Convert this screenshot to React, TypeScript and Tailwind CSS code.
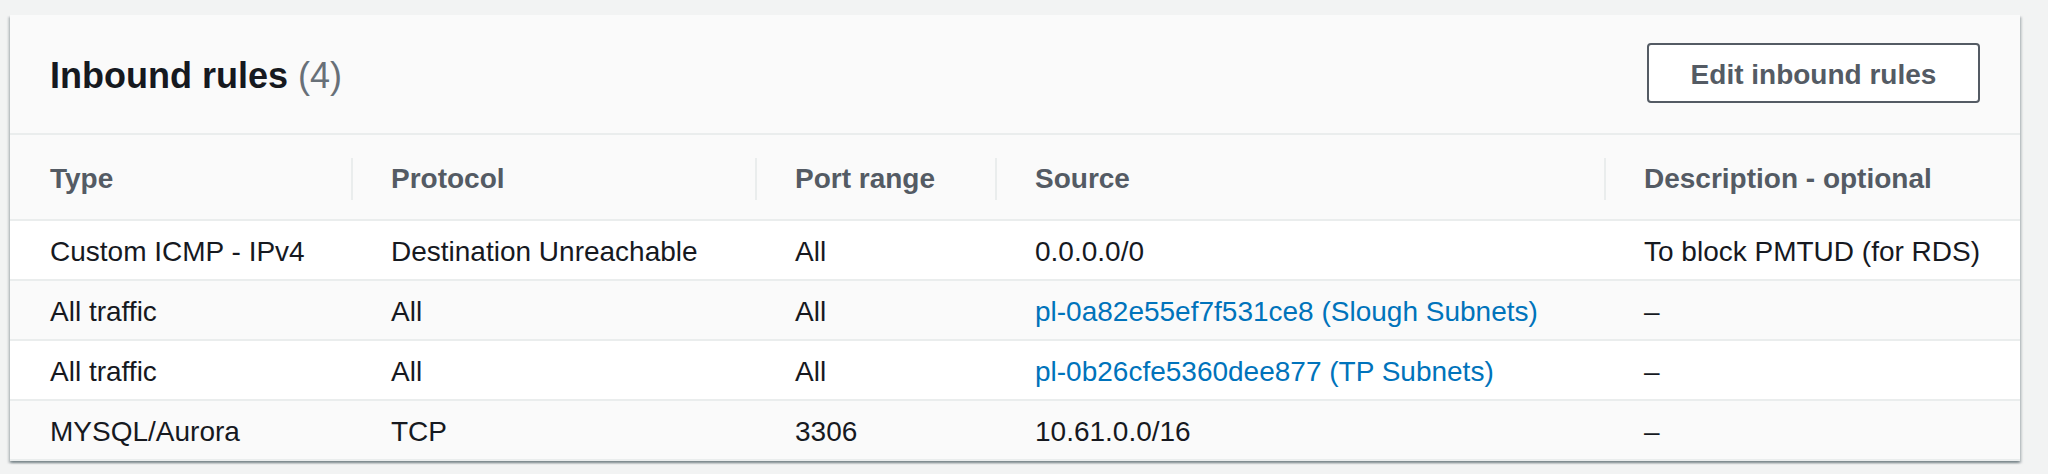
const rows = [
  { type: 'Custom ICMP - IPv4', protocol: 'Destination Unreachable', port: 'All', source: '0.0.0.0/0', link: false, description: 'To block PMTUD (for RDS)' },
  { type: 'All traffic', protocol: 'All', port: 'All', source: 'pl-0a82e55ef7f531ce8 (Slough Subnets)', link: true, description: '–' },
  { type: 'All traffic', protocol: 'All', port: 'All', source: 'pl-0b26cfe5360dee877 (TP Subnets)', link: true, description: '–' },
  { type: 'MYSQL/Aurora', protocol: 'TCP', port: '3306', source: '10.61.0.0/16', link: false, description: '–' },
];

const columns = ['Type', 'Protocol', 'Port range', 'Source', 'Description - optional'];

const grid = 'grid grid-cols-[341px_404px_240px_609px_1fr]';

export default function App() {
  return (
    <div className="h-[474px] bg-[#f2f3f3] pt-[15px] pl-[10px] font-['Liberation_Sans',Arial,sans-serif] text-[#16191f]">
      <div className="w-[2010px] bg-white shadow-[0_2px_2px_0_rgba(0,28,36,0.3),2px_2px_2px_0_rgba(0,28,36,0.15),-2px_2px_2px_0_rgba(0,28,36,0.15)]">
        <div className="h-[120px] flex items-center justify-between px-[40px] bg-[#fafafa] border-b-2 border-[#eaeded]">
          <h2 className="pt-[3px] text-[36px] font-bold leading-none">
            Inbound rules <span className="font-normal text-[#687078]">(4)</span>
          </h2>
          <button className="w-[333px] h-[60px] mb-[2px] pt-[4px] rounded-[4px] border-2 border-[#545b64] bg-white text-[28px] font-bold text-[#545b64]">
            Edit inbound rules
          </button>
        </div>

        <div className={`${grid} h-[86px] pt-[4px] bg-[#fafafa] border-b-2 border-[#eaeded] text-[28px] font-bold text-[#545b64]`}>
          {columns.map((col, i) => (
            <div key={col} className="flex items-center">
              {i > 0 ? <span className="w-[2px] h-[42px] bg-[#eaeded] shrink-0" /> : null}
              <span className={i > 0 ? 'ml-[38px]' : 'ml-[40px]'}>{col}</span>
            </div>
          ))}
        </div>

        {rows.map((r, i) => (
          <div key={i} className={`${grid} h-[60px] pt-[4px] border-b-2 border-[#eaeded] text-[28px] ${i % 2 === 1 ? 'bg-[#fafafa]' : 'bg-white'}`}>
            <div className="flex items-center pl-[40px]">{r.type}</div>
            <div className="flex items-center pl-[40px]">{r.protocol}</div>
            <div className="flex items-center pl-[40px]">{r.port}</div>
            <div className={`flex items-center pl-[40px] ${r.link ? 'text-[#0073bb]' : ''}`}>{r.source}</div>
            <div className="flex items-center pl-[40px]">{r.description}</div>
          </div>
        ))}
      </div>
    </div>
  );
}
